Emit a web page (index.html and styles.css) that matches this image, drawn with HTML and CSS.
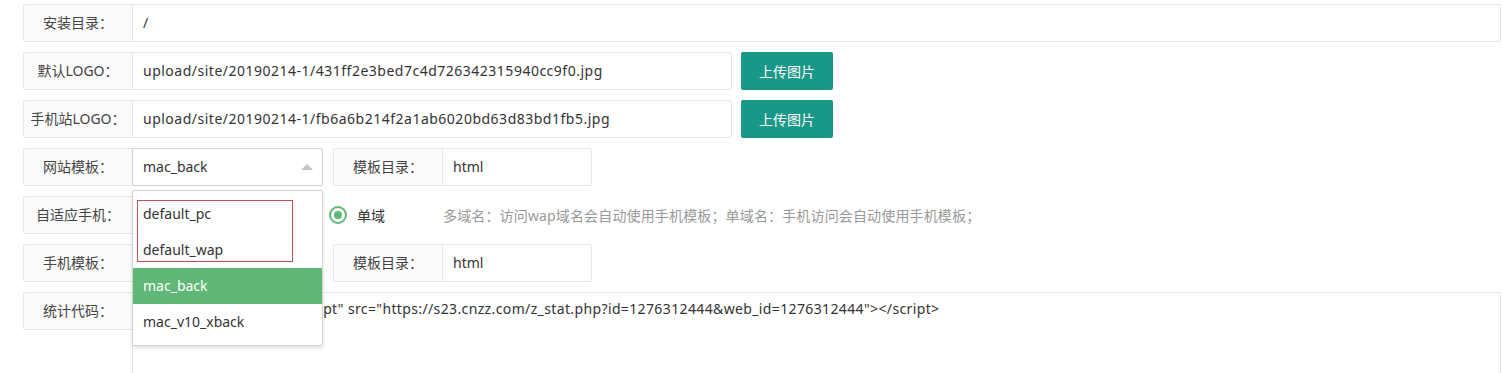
FILE: index.html
```html
<!DOCTYPE html>
<html lang="zh-CN">
<head>
  <meta charset="UTF-8">
  <title>网站参数配置</title>
  <link rel="stylesheet" href="styles.css">
</head>
<body>
  <div class="form">
    <div class="item">
      <div class="label">安装目录：</div>
      <div class="input grow">/</div>
    </div>

    <div class="item">
      <div class="label">默认LOGO：</div>
      <div class="input wide">upload/site/20190214-1/431ff2e3bed7c4d726342315940cc9f0.jpg</div>
      <button class="btn">上传图片</button>
    </div>

    <div class="item">
      <div class="label">手机站LOGO：</div>
      <div class="input wide">upload/site/20190214-1/fb6a6b214f2a1ab6020bd63d83bd1fb5.jpg</div>
      <button class="btn">上传图片</button>
    </div>

    <div class="item">
      <div class="label">网站模板：</div>
      <div class="select open">
        <div class="input">mac_back</div>
        <span class="arrow"></span>
        <dl class="options">
          <dd>default_pc</dd>
          <dd>default_wap</dd>
          <dd class="current">mac_back</dd>
          <dd>mac_v10_xback</dd>
          <div class="mark"></div>
        </dl>
      </div>
      <div class="label side">模板目录：</div>
      <div class="input short">html</div>
    </div>

    <div class="item">
      <div class="label">自适应手机：</div>
      <div class="radios">
        <span class="radio"><i class="dot"></i>多域</span>
        <span class="radio checked"><i class="dot"></i>单域</span>
        <span class="aux">多域名：访问wap域名会自动使用手机模板；单域名：手机访问会自动使用手机模板；</span>
      </div>
    </div>

    <div class="item">
      <div class="label">手机模板：</div>
      <div class="select">
        <div class="input">mac_back</div>
        <span class="arrow down"></span>
      </div>
      <div class="label side">模板目录：</div>
      <div class="input short">html</div>
    </div>

    <div class="item tall">
      <div class="label">统计代码：</div>
      <div class="textarea">&lt;script type="text/javascript" src="https://s23.cnzz.com/z_stat.php?id=1276312444&amp;web_id=1276312444"&gt;&lt;/script&gt;</div>
    </div>
  </div>
</body>
</html>
```

FILE: styles.css
```css
html, body {
  margin: 0;
  background: #fff;
  overflow: hidden;
}

.form {
  padding: 4px 1px 0 23px;
  font-family: "Noto Sans", "Noto Sans CJK SC", sans-serif;
  font-size: 14px;
  color: #333;
}

.item {
  display: flex;
  height: 38px;
  margin-bottom: 10px;
}

.item.tall {
  height: 120px;
}

.label {
  width: 110px;
  flex: none;
  box-sizing: border-box;
  height: 38px;
  line-height: 36px;
  text-align: center;
  background: #fbfbfb;
  border: 1px solid #e6e6e6;
  border-radius: 2px 0 0 2px;
  color: #444;
  white-space: nowrap;
}

.label.side {
  margin-left: 10px;
}

.input {
  box-sizing: border-box;
  height: 38px;
  line-height: 36px;
  padding: 0 10px;
  margin-left: -1px;
  border: 1px solid #e6e6e6;
  border-radius: 0 2px 2px 0;
  background: #fff;
  white-space: nowrap;
  overflow: hidden;
}

.grow {
  flex: 1;
}

.wide {
  width: 600px;
  letter-spacing: 0.5px;
}

.short {
  width: 150px;
}

.btn {
  margin-left: 9px;
  width: 92px;
  height: 38px;
  border: none;
  border-radius: 2px;
  background: #1a9887;
  color: #fff;
  font-family: "Noto Sans CJK SC", sans-serif;
  font-size: 14px;
  padding: 0;
}

.select {
  position: relative;
  width: 190px;
}

.select .input {
  width: 191px;
  padding-right: 30px;
}

.select.open .input {
  border-color: #d2d2d2;
}

.arrow {
  position: absolute;
  right: 10px;
  top: 16px;
  border-left: 6px solid transparent;
  border-right: 6px solid transparent;
  border-bottom: 6px solid #c2c2c2;
}

.arrow.down {
  border-bottom: none;
  border-top: 6px solid #c2c2c2;
}

.options {
  position: absolute;
  z-index: 10;
  top: 42px;
  left: -1px;
  width: 191px;
  box-sizing: border-box;
  margin: 0;
  padding: 5px 0;
  background: #fff;
  border: 1px solid #d2d2d2;
  border-radius: 2px;
  box-shadow: 0 2px 4px rgba(0, 0, 0, 0.12);
}

.options dd {
  margin: 0;
  padding: 0 10px;
  line-height: 36px;
  color: #333;
}

.options dd.current {
  background: #5fb878;
  color: #fff;
}

.mark {
  position: absolute;
  left: 4px;
  top: 9px;
  width: 156px;
  height: 62px;
  box-sizing: border-box;
  border: 1px solid #c0504d;
}

.radios {
  display: flex;
  align-items: center;
  padding-left: 120px;
}

.radio {
  display: inline-flex;
  align-items: center;
  margin-right: 20px;
  font-family: "Noto Sans CJK SC", sans-serif;
  color: #333;
}

.dot {
  width: 18px;
  height: 18px;
  box-sizing: border-box;
  border: 2px solid #c2c2c2;
  border-radius: 50%;
  margin-right: 10px;
  position: relative;
}

.radio.checked .dot {
  border-color: #5fb878;
}

.radio.checked .dot::after {
  content: "";
  position: absolute;
  left: 3px;
  top: 3px;
  width: 8px;
  height: 8px;
  border-radius: 50%;
  background: #5fb878;
}

.aux {
  margin-left: 38px;
  color: #999;
  letter-spacing: 0.15px;
}

.textarea {
  flex: 1;
  margin-left: -1px;
  box-sizing: border-box;
  height: 120px;
  padding: 6px 10px;
  line-height: 20px;
  letter-spacing: 0.37px;
  border: 1px solid #e6e6e6;
  border-radius: 0 2px 2px 0;
  white-space: nowrap;
  overflow: hidden;
}
```
